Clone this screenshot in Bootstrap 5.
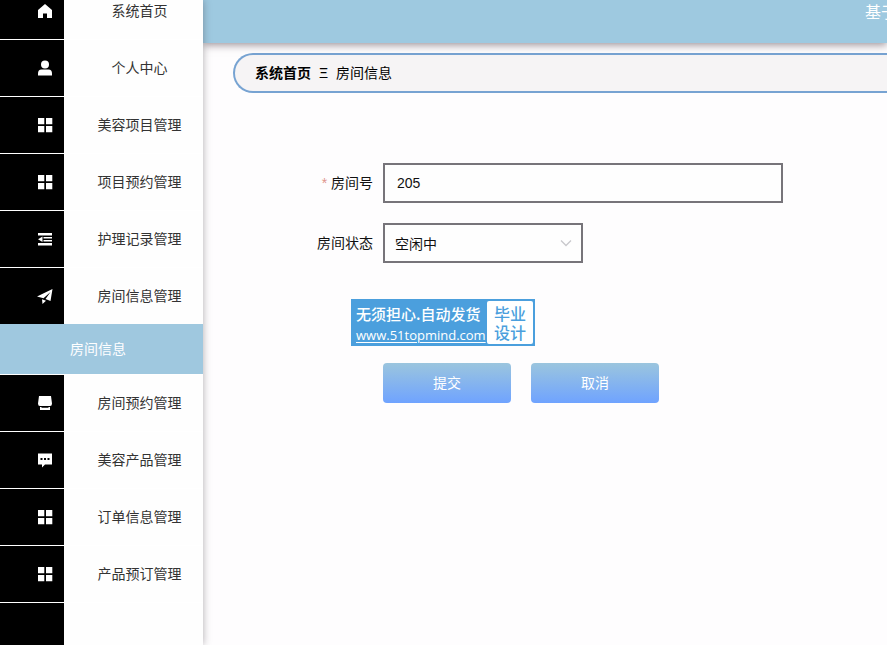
<!DOCTYPE html>
<html lang="zh-CN">
<head>
<meta charset="utf-8">
<meta name="viewport" content="width=device-width, initial-scale=1">
<title>房间信息</title>
<link href="https://cdn.jsdelivr.net/npm/bootstrap@5.3.0/dist/css/bootstrap.min.css" rel="stylesheet">
<style>
  body { font: 14px/20px "Liberation Sans", "Noto Sans CJK SC", sans-serif; color: #111; background: #fefdfe; }
  .side { width: 203px; background: #fefefe linear-gradient(to right, #000 64px, transparent 64px); box-shadow: 0 0 8px rgba(60, 50, 60, .4); z-index: 2; }
  .menu { margin-top: -17px; }
  .menu > li { border-bottom: 1px solid #fff; }
  .menu-link { height: 56px; color: #333; }
  .menu-icon { width: 64px; padding-left: 37px; }
  .menu-icon svg { display: block; width: 16px; height: 16px; fill: #fff; }
  .menu-text { padding-left: 12px; }
  .sub-link { height: 50px; padding-left: 70px; background: #9fc8df; color: #fff; }
  .topbar { height: 43px; background: #9ec9e0; box-shadow: 0 2px 8px rgba(60, 40, 50, .5); color: #fff; font-size: 16px; z-index: 1; }
  .topbar-title { width: 22px; padding-top: 3px; }
  .crumbs { height: 40px; margin: 10px 0 0 30px; padding-left: 20px; background: #f6f4f5; border: 2px solid #77a3d2; border-right: 0; border-radius: 20px 0 0 20px; color: #000; }
  .room-form { padding-top: 70px; }
  .field-row { gap: 10px; margin-bottom: 20px; }
  .field-label { width: 170px; }
  .field { height: 40px; border: 2px solid #77747a; border-radius: 0; font-size: 14px; color: #111; background-color: #fefefe; }
  .room-no { width: 400px; padding: 0 12px; }
  .room-state { width: 200px; padding: 2px 10px 0; background-position: right 9px center; background-size: 12px 12px;
    background-image: url("data:image/svg+xml,%3Csvg xmlns='http://www.w3.org/2000/svg' viewBox='0 0 12 12'%3E%3Cpath d='M1 3.500l5 5 5-5' fill='none' stroke='%23c8c8cc' stroke-width='1.300'/%3E%3C/svg%3E"); }
  .star { color: #e0958c; }
  .promo { width: 184px; height: 47px; margin: 36px 0 17px 148px; padding: 2px; background: #4b9fdd; color: #fff; }
  .promo-main { width: 134px; padding-left: 3px; font: 500 15px/26px "Noto Sans CJK SC", sans-serif; }
  .promo-main a { font: 500 13px/17px "Open Sans", sans-serif; color: #fff; text-underline-offset: 2px; }
  .promo-side { background: #fff; color: #4b9fdd; border-radius: 2px; font: 500 16px/19px "Noto Sans CJK SC", sans-serif; }
  .actions { padding-left: 180px; gap: 20px; }
  .btn-fade { width: 128px; height: 40px; padding: 0; border: 0; border-radius: 4px; color: #fff; font-size: 14px; background: linear-gradient(#9bc5de, #6fa3ff); }
  .btn-fade:hover { color: #fff; }
</style>
<script src="https://cdn.jsdelivr.net/npm/bootstrap@5.3.0/dist/js/bootstrap.bundle.min.js" defer></script>
</head>
<body>
<svg class="d-none" xmlns="http://www.w3.org/2000/svg">
  <symbol id="i-home" viewBox="0 0 16 16"><path d="M8 1 15 7v8h-5v-4.500H6V15H1V7z"/></symbol>
  <symbol id="i-user" viewBox="0 0 16 16"><circle cx="8" cy="4.500" r="4"/><path d="M1 15.500v-2q0-4 3.500-4h7q3.500 0 3.500 4v2z"/></symbol>
  <symbol id="i-grid" viewBox="0 0 16 16"><path d="M1 1h6.300v6.300H1zM9 1h6.300v6.300H9zM1 9h6.300v6.300H1zM9 9h6.300v6.300H9z"/></symbol>
  <symbol id="i-fold" viewBox="0 0 16 16"><path d="M1 2h14v2.500H1zM6.500 6h8.500v1.500H6.500zM6.500 9h8.500v1.500H6.500zM1 12h14v2.500H1zM5.500 5.500v5.500L1 8.250z"/></symbol>
  <symbol id="i-send" viewBox="0 0 16 16"><path d="M15.500 1 13.500 13 8.500 11 13.500 4 6.500 10.300 0 8.500zM5 11.200l4 1.500-3.500 3.300z"/></symbol>
  <symbol id="i-shop" viewBox="0 0 16 16"><path d="M2 1h12l1 7.500q0 2.500-2 2.500H3Q1 11 1 8.500zM3 12h1.500v.800h7V12H13v3H3z"/></symbol>
  <symbol id="i-chat" viewBox="0 0 16 16"><path fill-rule="evenodd" d="M1 1.500h14v11H8L5 15.500v-3H1zM3.500 6v2h2V6zM7 6v2h2V6zM10.500 6v2h2V6z"/></symbol>
</svg>
<div class="d-flex vh-100 overflow-hidden">
  <nav class="side flex-shrink-0 position-relative" aria-label="主菜单">
    <ul class="menu list-unstyled mb-0">
      <li><a class="menu-link d-flex align-items-center text-decoration-none" href="#"><span class="menu-icon"><svg><use href="#i-home"/></svg></span><span class="menu-text flex-fill text-center">系统首页</span></a></li>
      <li><a class="menu-link d-flex align-items-center text-decoration-none" href="#"><span class="menu-icon"><svg><use href="#i-user"/></svg></span><span class="menu-text flex-fill text-center">个人中心</span></a></li>
      <li><a class="menu-link d-flex align-items-center text-decoration-none" href="#"><span class="menu-icon"><svg><use href="#i-grid"/></svg></span><span class="menu-text flex-fill text-center">美容项目管理</span></a></li>
      <li><a class="menu-link d-flex align-items-center text-decoration-none" href="#"><span class="menu-icon"><svg><use href="#i-grid"/></svg></span><span class="menu-text flex-fill text-center">项目预约管理</span></a></li>
      <li><a class="menu-link d-flex align-items-center text-decoration-none" href="#"><span class="menu-icon"><svg><use href="#i-fold"/></svg></span><span class="menu-text flex-fill text-center">护理记录管理</span></a></li>
      <li><a class="menu-link d-flex align-items-center text-decoration-none" href="#"><span class="menu-icon"><svg><use href="#i-send"/></svg></span><span class="menu-text flex-fill text-center">房间信息管理</span></a>
        <a class="sub-link d-flex align-items-center text-decoration-none" href="#" aria-current="page">房间信息</a></li>
      <li><a class="menu-link d-flex align-items-center text-decoration-none" href="#"><span class="menu-icon"><svg><use href="#i-shop"/></svg></span><span class="menu-text flex-fill text-center">房间预约管理</span></a></li>
      <li><a class="menu-link d-flex align-items-center text-decoration-none" href="#"><span class="menu-icon"><svg><use href="#i-chat"/></svg></span><span class="menu-text flex-fill text-center">美容产品管理</span></a></li>
      <li><a class="menu-link d-flex align-items-center text-decoration-none" href="#"><span class="menu-icon"><svg><use href="#i-grid"/></svg></span><span class="menu-text flex-fill text-center">订单信息管理</span></a></li>
      <li><a class="menu-link d-flex align-items-center text-decoration-none" href="#"><span class="menu-icon"><svg><use href="#i-grid"/></svg></span><span class="menu-text flex-fill text-center">产品预订管理</span></a></li>
    </ul>
  </nav>
  <main class="flex-fill overflow-hidden">
    <header class="topbar d-flex justify-content-end position-relative"><div class="topbar-title text-nowrap">基于</div></header>
    <nav class="crumbs d-flex align-items-center" aria-label="面包屑">
      <a class="fw-bold text-reset text-decoration-none" href="#">系统首页</a><span class="px-2">Ξ</span><span>房间信息</span>
    </nav>
    <form class="room-form">
      <div class="field-row d-flex align-items-center">
        <label class="field-label text-end" for="roomNo"><span class="star">*</span> 房间号</label>
        <input class="field room-no" id="roomNo" type="text" value="205">
      </div>
      <div class="field-row d-flex align-items-center">
        <label class="field-label text-end" for="roomState">房间状态</label>
        <select class="field room-state form-select" id="roomState"><option>空闲中</option></select>
      </div>
      <div class="promo d-flex">
        <div class="promo-main text-nowrap"><div>无须担心.自动发货</div><a class="d-block" href="#">www.51topmind.com</a></div>
        <div class="promo-side flex-fill d-flex align-items-center justify-content-center text-center">毕业<br>设计</div>
      </div>
      <div class="actions d-flex">
        <button class="btn btn-fade" type="submit">提交</button>
        <button class="btn btn-fade" type="button">取消</button>
      </div>
    </form>
  </main>
</div>
</body>
</html>
